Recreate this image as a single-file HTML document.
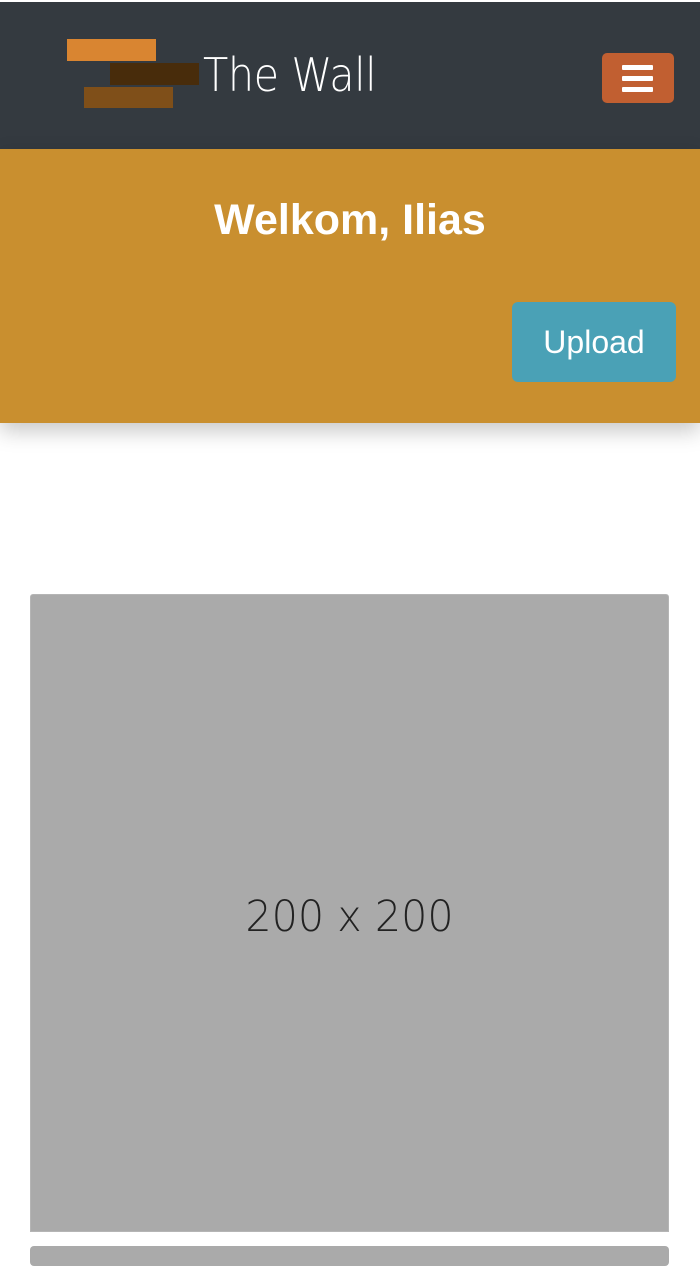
<!DOCTYPE html>
<html><head><meta charset="utf-8"><style>
html,body{margin:0;padding:0;background:#fff;width:700px;height:1250px;overflow:hidden;font-family:"Liberation Sans",Arial,sans-serif}
.nav{position:absolute;top:2px;left:0;width:700px;height:147px;background:#343a40}
.r{position:absolute}
.brand{position:absolute;left:203px;top:46px;font-size:46px;color:#fff;font-family:"DejaVu Sans","Liberation Sans",sans-serif;font-weight:300;letter-spacing:-0.5px;line-height:54px;transform:scaleX(0.9);transform-origin:left;white-space:nowrap}
.burger{position:absolute;left:602px;top:51px;width:72px;height:50px;background:#c15f31;border-radius:5px}
.burger i{position:absolute;left:20px;width:31px;height:5px;background:#fff;border-radius:1px}
.banner{position:absolute;top:149px;left:0;width:700px;height:274px;background:#c98f2f;box-shadow:0 8px 20px rgba(0,0,0,0.22)}
h1{position:absolute;margin:0;top:194px;left:0;width:700px;text-align:center;color:#fff;font-size:43px;font-weight:bold;line-height:52px}
.up{position:absolute;left:512px;top:302px;width:164px;height:80px;background:#4aa1b6;border-radius:6px;color:#fff;font-size:32px;line-height:80px;text-align:center}
.img{position:absolute;left:30px;top:594px;width:639px;height:638px;background:#aaa;border-radius:3px 3px 0 0;border:1px solid #b5b5b5;box-sizing:border-box}
.img span{position:absolute;left:0;width:100%;top:292px;text-align:center;font-size:43px;color:#222;font-family:"DejaVu Sans",sans-serif;font-weight:300;line-height:60px;transform:scaleX(0.96)}
.img2{position:absolute;left:30px;top:1246px;width:639px;height:20px;background:#aaa;border-radius:4px}
</style></head><body>
<div class="nav">
<div class="r" style="left:67px;top:37px;width:89px;height:22px;background:#d98531"></div>
<div class="r" style="left:110px;top:61px;width:89px;height:22px;background:#482c0b"></div>
<div class="r" style="left:84px;top:85px;width:89px;height:21px;background:#7f4f19"></div>
<div class="brand">The Wall</div>
<div class="burger"><i style="top:12px"></i><i style="top:23px"></i><i style="top:34px"></i></div>
</div>
<div class="banner"></div>
<h1>Welkom, Ilias</h1>
<div class="up">Upload</div>
<div class="img"><span>200 x 200</span></div>
<div class="img2"></div>
</body></html>
